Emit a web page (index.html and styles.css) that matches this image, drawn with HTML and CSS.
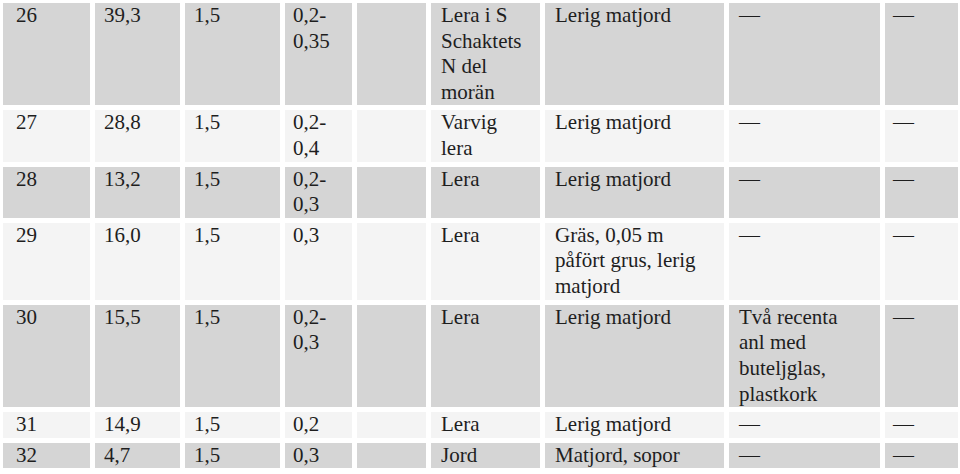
FILE: index.html
```html
<!DOCTYPE html>
<html>
<head>
<meta charset="utf-8">
<title>Schakt</title>
<link rel="stylesheet" href="styles.css">
</head>
<body>
<div class="sheet">
  <div class="row dark">
    <p class="cell first">26</p><p class="cell">39,3</p><p class="cell">1,5</p><p class="cell n">0,2-<br>0,35</p><p class="cell"></p>
    <p class="cell t">Lera i S<br>Schaktets<br>N del<br>morän</p><p class="cell t">Lerig matjord</p><p class="cell t">—</p><p class="cell n">—</p>
  </div>
  <div class="row light">
    <p class="cell first">27</p><p class="cell">28,8</p><p class="cell">1,5</p><p class="cell n">0,2-<br>0,4</p><p class="cell"></p>
    <p class="cell t">Varvig<br>lera</p><p class="cell t">Lerig matjord</p><p class="cell t">—</p><p class="cell n">—</p>
  </div>
  <div class="row dark">
    <p class="cell first">28</p><p class="cell">13,2</p><p class="cell">1,5</p><p class="cell n">0,2-<br>0,3</p><p class="cell"></p>
    <p class="cell t">Lera</p><p class="cell t">Lerig matjord</p><p class="cell t">—</p><p class="cell n">—</p>
  </div>
  <div class="row light">
    <p class="cell first">29</p><p class="cell">16,0</p><p class="cell">1,5</p><p class="cell n">0,3</p><p class="cell"></p>
    <p class="cell t">Lera</p><p class="cell t">Gräs, 0,05 m<br>påfört grus, lerig<br>matjord</p><p class="cell t">—</p><p class="cell n">—</p>
  </div>
  <div class="row dark">
    <p class="cell first">30</p><p class="cell">15,5</p><p class="cell">1,5</p><p class="cell n">0,2-<br>0,3</p><p class="cell"></p>
    <p class="cell t">Lera</p><p class="cell t">Lerig matjord</p><p class="cell t">Två recenta<br>anl med<br>buteljglas,<br>plastkork</p><p class="cell n">—</p>
  </div>
  <div class="row light">
    <p class="cell first">31</p><p class="cell">14,9</p><p class="cell">1,5</p><p class="cell n">0,2</p><p class="cell"></p>
    <p class="cell t">Lera</p><p class="cell t">Lerig matjord</p><p class="cell t">—</p><p class="cell n">—</p>
  </div>
  <div class="row dark">
    <p class="cell first">32</p><p class="cell">4,7</p><p class="cell">1,5</p><p class="cell n">0,3</p><p class="cell"></p>
    <p class="cell t">Jord</p><p class="cell t">Matjord, sopor</p><p class="cell t">—</p><p class="cell n">—</p>
  </div>
</div>
</body>
</html>
```
FILE: styles.css
```css
body {
  margin: 0;
  background: #ffffff;
  color: #1e1e1e;
  font: 21px/1.22 "Liberation Serif", "Times New Roman", serif;
}

.sheet {
  display: flex;
  flex-direction: column;
  gap: 5px;
  padding: 3px 0 0 3px;
  font: 21px/1.22 "Liberation Serif", "Times New Roman", serif;
}

.row {
  display: grid;
  grid-template-columns: 87px 85px 95px 67px 69px 109px 179px 151px 73px;
  column-gap: 5px;
}

.cell {
  font: 21px/1.22 "Liberation Serif", "Times New Roman", serif;
  margin: 0;
  padding: 0 0 0 9px;
  min-height: 25.6px;
}

.first {
  padding-left: 13px;
}

.n {
  padding-left: 8px;
}

.t {
  padding-left: 10px;
}

.dark .cell {
  background: #d5d5d5;
}

.light .cell {
  background: #f4f4f4;
}
```
